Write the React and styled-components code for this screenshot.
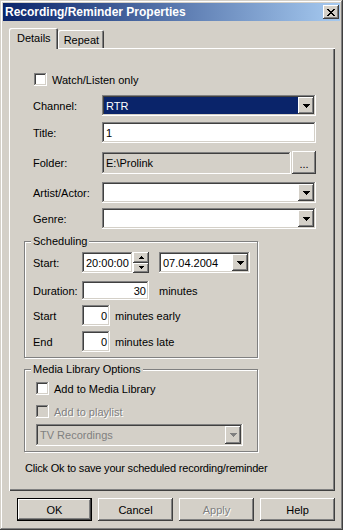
import React from 'react'
import styled, { createGlobalStyle } from 'styled-components'

const GlobalStyle = createGlobalStyle`
  html, body {
    margin: 0;
    padding: 0;
    background: #d4d0c8;
  }
  body {
    font-family: "Liberation Sans", Arial, sans-serif;
    font-size: 11px;
    color: #000;
  }
`

const raised = `
  box-shadow: inset -1px -1px #404040, inset 1px 1px #fff,
    inset -2px -2px #808080, inset 2px 2px #d4d0c8;
`

const sunken = `
  box-shadow: inset -1px -1px #fff, inset 1px 1px #808080,
    inset -2px -2px #d4d0c8, inset 2px 2px #404040;
`

const Window = styled.div`
  width: 343px;
  height: 530px;
  box-sizing: border-box;
  padding: 3px;
  display: flex;
  flex-direction: column;
  background: #d4d0c8;
  box-shadow: inset -1px -1px #404040, inset 1px 1px #d4d0c8,
    inset -2px -2px #808080, inset 2px 2px #fff;
`

const TitleBar = styled.div`
  height: 18px;
  display: flex;
  align-items: center;
  justify-content: space-between;
  padding: 0 1px 0 2px;
  background: linear-gradient(to right, #0a246a, #a6caf0);
`

const TitleText = styled.span`
  color: #fff;
  font-weight: bold;
  font-size: 12px;
  line-height: 14px;
`

const CloseButton = styled.div`
  width: 16px;
  height: 14px;
  display: flex;
  align-items: center;
  justify-content: center;
  background: #d4d0c8;
  ${raised}
`

const Body = styled.div`
  flex: 1;
  display: flex;
  flex-direction: column;
  padding: 7px 5px 0 6px;
`

const TabStrip = styled.div`
  height: 20px;
  display: flex;
  align-items: flex-end;
  position: relative;
  z-index: 1;
`

const Tab = styled.div`
  height: ${p => (p.$active ? 21 : 18)}px;
  margin-bottom: ${p => (p.$active ? -1 : 0)}px;
  padding: ${p => (p.$active ? '0 7px 1px 8px' : '2px 5px 0 6px')};
  box-sizing: border-box;
  display: flex;
  align-items: center;
  background: #d4d0c8;
  border-radius: 2px 2px 0 0;
  box-shadow: inset 1px 1px #fff, inset -1px 0 #404040, inset -2px 0 #808080;
`

const Panel = styled.div`
  flex: 1;
  display: flex;
  flex-direction: column;
  padding: 0 19px 0 24px;
  background: #d4d0c8;
  box-shadow: inset 1px 1px #fff, inset -1px -1px #404040,
    inset -2px -2px #808080;
`

const CheckRow = styled.label`
  display: flex;
  align-items: center;
  height: 13px;
  margin-top: ${p => p.$top || 0}px;
  margin-left: ${p => p.$indent || 0}px;
  color: ${p => (p.$disabled ? '#808080' : '#000')};
  text-shadow: ${p => (p.$disabled ? '1px 1px #fff' : 'none')};
`

const CheckBox = styled.span`
  width: 13px;
  height: 13px;
  margin-right: 5px;
  flex: none;
  background: ${p => (p.$disabled ? '#d4d0c8' : '#fff')};
  ${sunken}
`

const FormRow = styled.div`
  display: flex;
  align-items: center;
  height: ${p => p.$height || 21}px;
  margin-top: ${p => p.$top || 0}px;
`

const Label = styled.span`
  width: ${p => p.$width}px;
  flex: none;
`

const Suffix = styled.span`
  margin-left: ${p => p.$gap}px;
`

const Field = styled.div`
  width: ${p => p.$width}px;
  height: ${p => p.$height || 21}px;
  box-sizing: border-box;
  padding: 0 ${p => (p.$right ? 3 : 2)}px 0 4px;
  display: flex;
  align-items: center;
  justify-content: ${p => (p.$right ? 'flex-end' : 'flex-start')};
  background: ${p => (p.$readonly ? '#d4d0c8' : '#fff')};
  flex: none;
  ${sunken}
`

const Combo = styled.div`
  width: ${p => p.$width}px;
  height: ${p => p.$height || 21}px;
  box-sizing: border-box;
  padding: 2px;
  display: flex;
  flex: none;
  margin-left: ${p => p.$gap || 0}px;
  background: ${p => (p.$disabled ? '#d4d0c8' : '#fff')};
  ${sunken}
`

const ComboValue = styled.div`
  flex: 1;
  display: flex;
  align-items: center;
  padding-left: 2px;
  background: ${p => (p.$selected ? '#0a246a' : 'transparent')};
  color: ${p => (p.$selected ? '#fff' : p.$disabled ? '#808080' : '#000')};
`

const DropButton = styled.div`
  width: 16px;
  flex: none;
  display: flex;
  align-items: center;
  justify-content: center;
  background: #d4d0c8;
  ${raised}
`

const BrowseButton = styled.div`
  width: 24px;
  height: 23px;
  margin-left: 1px;
  display: flex;
  align-items: center;
  justify-content: center;
  padding-top: 3px;
  box-sizing: border-box;
  background: #d4d0c8;
  ${raised}
`

const Spinner = styled.div`
  width: 16px;
  height: 21px;
  display: flex;
  flex-direction: column;
  flex: none;
`

const SpinButton = styled.div`
  flex: 1;
  display: flex;
  align-items: center;
  justify-content: center;
  background: #d4d0c8;
  ${raised}
`

const GroupBox = styled.div`
  position: relative;
  width: 234px;
  height: ${p => p.$height}px;
  margin-left: -9px;
  margin-top: ${p => p.$top}px;
  box-sizing: border-box;
  padding: ${p => p.$padTop}px 0 0 ${p => p.$padLeft}px;
  border: 1px solid #808080;
  box-shadow: inset 1px 1px #fff, 1px 1px #fff;
  display: flex;
  flex-direction: column;
`

const GroupLabel = styled.span`
  position: absolute;
  top: -7px;
  left: 6px;
  padding: 0 2px;
  line-height: 13px;
  background: #d4d0c8;
`

const Note = styled.div`
  margin: 10px 0 0 -8px;
  line-height: 13px;
  letter-spacing: -0.2px;
`

const ButtonRow = styled.div`
  height: 23px;
  margin: 7px 0 6px;
  padding-left: 8px;
  display: flex;
  gap: 6px;
`

const Button = styled.div`
  width: 75px;
  height: 23px;
  box-sizing: border-box;
  display: flex;
  align-items: center;
  justify-content: center;
  background: #d4d0c8;
  color: ${p => (p.$disabled ? '#808080' : '#000')};
  text-shadow: ${p => (p.$disabled ? '1px 1px #fff' : 'none')};
  ${p =>
    p.$default
      ? `border: 1px solid #000;
         box-shadow: inset -1px -1px #404040, inset 1px 1px #fff,
           inset -2px -2px #808080;`
      : raised}
`

const PixelArrow = ({ rows, color = '#000', up }) => {
  const w = rows[0]
  const h = rows.length
  const list = up ? [...rows].reverse() : rows
  return (
    <svg width={w} height={h} shapeRendering="crispEdges">
      {list.map((rw, i) => (
        <rect key={i} x={(w - rw) / 2} y={i} width={rw} height={1} fill={color} />
      ))}
    </svg>
  )
}

const DownArrow = ({ disabled }) => (
  <PixelArrow rows={[7, 5, 3, 1]} color={disabled ? '#808080' : '#000'} />
)

const CloseGlyph = () => (
  <svg width="8" height="7" shapeRendering="crispEdges">
    {[0, 1, 2, 3, 4, 5, 6].map(i => (
      <g key={i}>
        <rect x={i} y={i} width="2" height="1" fill="#000" />
        <rect x={6 - i} y={i} width="2" height="1" fill="#000" />
      </g>
    ))}
  </svg>
)

const ComboBox = ({ value, width, height, selected, disabled, gap }) => (
  <Combo $width={width} $height={height} $disabled={disabled} $gap={gap}>
    <ComboValue $selected={selected} $disabled={disabled}>{value}</ComboValue>
    <DropButton>
      <DownArrow disabled={disabled} />
    </DropButton>
  </Combo>
)

export default function App() {
  return (
    <>
      <GlobalStyle />
      <Window>
        <TitleBar>
          <TitleText>Recording/Reminder Properties</TitleText>
          <CloseButton>
            <CloseGlyph />
          </CloseButton>
        </TitleBar>
        <Body>
          <TabStrip>
            <Tab $active>Details</Tab>
            <Tab>Repeat</Tab>
          </TabStrip>
          <Panel>
            <CheckRow $top={25} $indent={1}>
              <CheckBox />
              Watch/Listen only
            </CheckRow>

            <FormRow $top={9}>
              <Label $width={69}>Channel:</Label>
              <ComboBox value="RTR" width={214} selected />
            </FormRow>

            <FormRow $top={6}>
              <Label $width={69}>Title:</Label>
              <Field $width={214}>1</Field>
            </FormRow>

            <FormRow $top={8} $height={23}>
              <Label $width={69}>Folder:</Label>
              <Field $width={189} $height={22} $readonly>E:\Prolink</Field>
              <BrowseButton>...</BrowseButton>
            </FormRow>

            <FormRow $top={8}>
              <Label $width={69}>Artist/Actor:</Label>
              <ComboBox value="" width={214} />
            </FormRow>

            <FormRow $top={5}>
              <Label $width={69}>Genre:</Label>
              <ComboBox value="" width={214} />
            </FormRow>

            <GroupBox $top={12} $height={117} $padTop={10} $padLeft={8}>
              <GroupLabel>Scheduling</GroupLabel>
              <FormRow>
                <Label $width={49}>Start:</Label>
                <Field $width={51}>20:00:00</Field>
                <Spinner>
                  <SpinButton>
                    <PixelArrow rows={[5, 3, 1]} up />
                  </SpinButton>
                  <SpinButton>
                    <PixelArrow rows={[5, 3, 1]} />
                  </SpinButton>
                </Spinner>
                <ComboBox value="07.04.2004" width={91} gap={10} />
              </FormRow>
              <FormRow $top={7}>
                <Label $width={49}>Duration:</Label>
                <Field $width={67} $height={19} $right>30</Field>
                <Suffix $gap={10}>minutes</Suffix>
              </FormRow>
              <FormRow $top={4}>
                <Label $width={49}>Start</Label>
                <Field $width={28} $right>0</Field>
                <Suffix $gap={5}>minutes early</Suffix>
              </FormRow>
              <FormRow $top={5}>
                <Label $width={49}>End</Label>
                <Field $width={28} $right>0</Field>
                <Suffix $gap={5}>minutes late</Suffix>
              </FormRow>
            </GroupBox>

            <GroupBox $top={11} $height={83} $padTop={12} $padLeft={11}>
              <GroupLabel>Media Library Options</GroupLabel>
              <CheckRow>
                <CheckBox />
                Add to Media Library
              </CheckRow>
              <CheckRow $top={10} $disabled>
                <CheckBox $disabled />
                Add to playlist
              </CheckRow>
              <FormRow $top={6} $height={22}>
                <ComboBox value="TV Recordings" width={207} height={22} disabled />
              </FormRow>
            </GroupBox>

            <Note>Click Ok to save your scheduled recording/reminder</Note>
          </Panel>
          <ButtonRow>
            <Button $default>OK</Button>
            <Button>Cancel</Button>
            <Button $disabled>Apply</Button>
            <Button>Help</Button>
          </ButtonRow>
        </Body>
      </Window>
    </>
  )
}
